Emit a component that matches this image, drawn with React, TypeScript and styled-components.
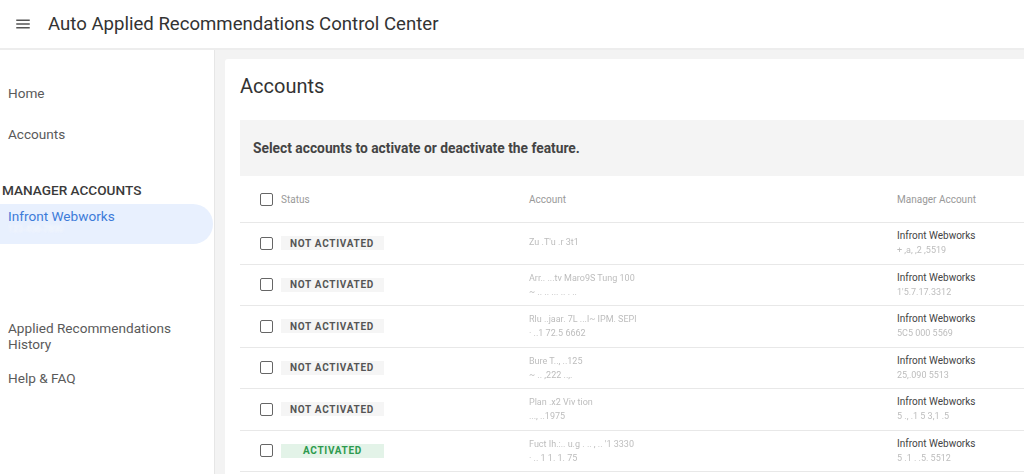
import styled, { createGlobalStyle } from "styled-components";

const GlobalStyle = createGlobalStyle`
  html, body {
    margin: 0;
    padding: 0;
    background: #ffffff;
    font-family: Roboto, "Liberation Sans", Arial, sans-serif;
    overflow: hidden;
  }
`;

type Row = {
  active: boolean;
  account: string;
  accountId: string;
  managerId: string;
};

const rows: Row[] = [
  { active: false, account: "Zu .T'u .r 3t1", accountId: "", managerId: "+ ,a, ,2 ,5519" },
  { active: false, account: "Arr.. ...tv Maro9S Tung 100", accountId: "~ .. .. ... .. . ..", managerId: "1'5.7.17.3312" },
  { active: false, account: "Rlu ..jaar. 7L ...l~ IPM. SEPl", accountId: "· ..1 72.5 6662", managerId: "5C5 000 5569" },
  { active: false, account: "Bure T.., ..125", accountId: "~ .. ,222 ..,.", managerId: "25,.090 5513" },
  { active: false, account: "Plan .x2 Viv tion", accountId: "..., ..1975", managerId: "5 ., .1 5 3,1 .5" },
  { active: true, account: "Fuct Ih.:.. u.g . .. , .. '1 3330", accountId: "· .. 1 1. 1. 75", managerId: "5 .1 . .5. 5512" },
];

function MenuIcon() {
  return (
    <svg width="18" height="18" viewBox="0 0 24 24">
      <path d="M3 18h18v-2H3v2zm0-5h18v-2H3v2zm0-7v2h18V6H3z" fill="#555" />
    </svg>
  );
}

function App() {
  return (
    <>
      <GlobalStyle />
      <Page>
        <Header>
          <MenuButton>
            <MenuIcon />
          </MenuButton>
          <HeaderTitle>Auto Applied Recommendations Control Center</HeaderTitle>
        </Header>
        <Body>
          <Sidebar>
            <NavItem space={25}>Home</NavItem>
            <NavItem space={0}>Accounts</NavItem>
            <SectionLabel>MANAGER ACCOUNTS</SectionLabel>
            <ActiveItem>
              <ActiveName>Infront Webworks</ActiveName>
              <SubLine>123-456-7890</SubLine>
            </ActiveItem>
            <BottomNav>
              <NavItem space={18}>
                Applied Recommendations
                <br />
                History
              </NavItem>
              <NavItem space={0}>Help &amp; FAQ</NavItem>
            </BottomNav>
          </Sidebar>
          <Main>
            <Card>
              <PageTitle>Accounts</PageTitle>
              <Banner>Select accounts to activate or deactivate the feature.</Banner>
              <Table>
                <HeadRow>
                  <StatusCell>
                    <Checkbox />
                    <HeadLabel>Status</HeadLabel>
                  </StatusCell>
                  <HeadLabel>Account</HeadLabel>
                  <HeadLabel>Manager Account</HeadLabel>
                </HeadRow>
                {rows.map((r, i) => (
                  <DataRow key={i}>
                    <StatusCell>
                      <Checkbox />
                      <Chip active={r.active}>
                        {r.active ? "ACTIVATED" : "NOT ACTIVATED"}
                      </Chip>
                    </StatusCell>
                    <Stack>
                      <Blurred>{r.account}</Blurred>
                      <Blurred>{r.accountId}</Blurred>
                    </Stack>
                    <Stack>
                      <Manager>Infront Webworks</Manager>
                      <Blurred>{r.managerId}</Blurred>
                    </Stack>
                  </DataRow>
                ))}
              </Table>
            </Card>
          </Main>
        </Body>
      </Page>
    </>
  );
}

const Page = styled.div`
  width: 1024px;
  height: 474px;
  display: flex;
  flex-direction: column;
  overflow: hidden;
`;

const Header = styled.header`
  height: 50px;
  flex-shrink: 0;
  display: flex;
  align-items: center;
  padding-left: 14px;
  background: #fff;
  border-bottom: 2px solid #ededed;
  box-sizing: border-box;
`;

const MenuButton = styled.div`
  width: 18px;
  height: 18px;
  display: flex;
  margin-right: 16px;
`;

const HeaderTitle = styled.h1`
  margin: 0;
  font-size: 18.6px;
  font-weight: 400;
  color: #333;
`;

const Body = styled.div`
  flex: 1;
  display: flex;
  min-height: 0;
`;

const Sidebar = styled.nav`
  width: 215px;
  flex-shrink: 0;
  background: #fff;
  border-right: 1px solid #e6e6e6;
  padding-top: 35px;
  box-sizing: border-box;
  display: flex;
  flex-direction: column;
`;

const NavItem = styled.div<{ space: number }>`
  padding-left: 8px;
  font-size: 13.6px;
  line-height: 16px;
  color: #5a5a5a;
  margin-bottom: ${(p) => p.space}px;
`;

const SectionLabel = styled.div`
  padding-left: 2px;
  margin-top: 40px;
  font-size: 13.6px;
  font-weight: 500;
  color: #3a3a3a;
  line-height: 16px;
`;

const ActiveItem = styled.div`
  width: 213px;
  height: 40px;
  margin-top: 6px;
  box-sizing: border-box;
  padding: 5px 0 0 8px;
  background: #e8f0fe;
  border-radius: 0 20px 20px 0;
`;

const ActiveName = styled.div`
  font-size: 13.6px;
  line-height: 15px;
  color: #3d7bd9;
`;

const SubLine = styled.div`
  font-size: 9px;
  line-height: 11px;
  color: #f6f8fc;
  filter: blur(0.8px);
`;

const BottomNav = styled.div`
  margin-top: 76px;
  display: flex;
  flex-direction: column;
`;

const Main = styled.main`
  flex: 1;
  background: #f3f3f3;
  padding: 9px 0 0 10px;
  min-width: 0;
`;

const Card = styled.section`
  background: #fff;
  height: 100%;
  padding: 15px 0 0 15px;
  box-sizing: border-box;
  border-top-left-radius: 3px;
`;

const PageTitle = styled.h2`
  margin: 0 0 22px;
  font-size: 20px;
  font-weight: 400;
  color: #333;
  line-height: 24px;
`;

const Banner = styled.div`
  height: 56px;
  background: #f4f4f4;
  display: flex;
  align-items: center;
  padding-left: 13px;
  font-size: 13.8px;
  font-weight: 700;
  color: #444;
`;

const Table = styled.div`
  display: flex;
  flex-direction: column;
`;

const gridCols = `
  display: grid;
  grid-template-columns: 269px 368px 1fr;
  align-items: center;
  border-bottom: 1px solid #e8e8e8;
  box-sizing: border-box;
  padding-left: 20px;
`;

const HeadRow = styled.div`
  ${gridCols}
  height: 47px;
`;

const DataRow = styled.div`
  ${gridCols}
  height: 41.5px;
`;

const StatusCell = styled.div`
  display: flex;
  align-items: center;
`;

const Checkbox = styled.span`
  width: 11px;
  height: 11px;
  border: 1.5px solid #666;
  border-radius: 2px;
  margin-right: 8px;
  flex-shrink: 0;
`;

const HeadLabel = styled.span`
  font-size: 10px;
  color: #999;
`;

const Chip = styled.span<{ active: boolean }>`
  width: 103px;
  height: 14px;
  display: flex;
  align-items: center;
  justify-content: ${(p) => (p.active ? "center" : "flex-start")};
  padding-left: ${(p) => (p.active ? "0" : "9px")};
  box-sizing: border-box;
  background: ${(p) => (p.active ? "#e3f3e8" : "#f5f5f5")};
  color: ${(p) => (p.active ? "#2e9a4e" : "#555")};
  font-size: 10px;
  font-weight: 700;
  letter-spacing: 0.7px;
`;

const Stack = styled.div`
  display: flex;
  flex-direction: column;
  gap: 2px;
`;

const Manager = styled.span`
  font-size: 10px;
  color: #444;
  line-height: 12px;
`;

const Blurred = styled.span`
  font-size: 9px;
  line-height: 12px;
  color: #bdbdbd;
  filter: blur(0.6px);
  white-space: nowrap;
`;

export default App;
